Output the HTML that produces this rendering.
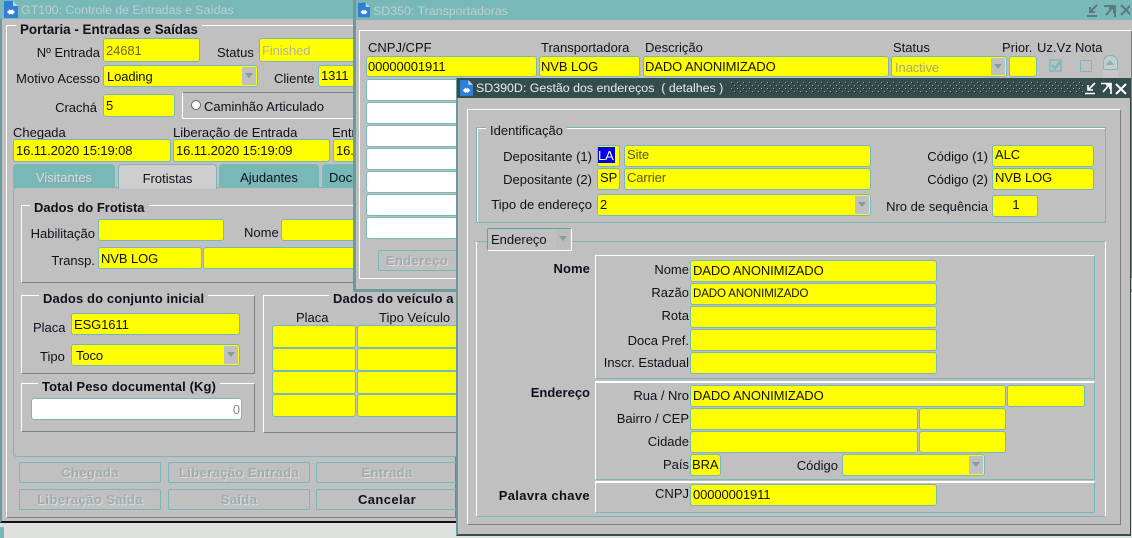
<!DOCTYPE html>
<html><head><meta charset="utf-8">
<style>
html,body{margin:0;padding:0;width:1132px;height:538px;overflow:hidden;background:#dfe1df}
*{box-sizing:border-box}
body{position:relative;font:13px/16px "Liberation Sans",Arial,sans-serif;color:#000}
div,span,svg{position:absolute}
.w{background:#c0c0c0}
.t{white-space:nowrap;line-height:16px;color:#10101c}
.b{font-weight:bold;letter-spacing:.12px}
.r{text-align:right}
.f{background:#ff0;border:1.5px solid #78b8b8;border-radius:3px;white-space:nowrap;overflow:hidden;padding-left:2px;color:#111;letter-spacing:-.1px}
.w3 .f{border-radius:2px;border:2px solid;border-color:#5f9f9f #fff #fff #5f9f9f;padding-left:1px}
.e{background:#fff}
.a{right:1px;top:1px;bottom:1px;width:14px;background:#c0c0c0}
.a:after{content:"";position:absolute;left:3px;top:6px;border:4.5px solid transparent;border-top:5px solid #889a9a;border-bottom:0}
.btn{border:1.5px solid #78b8b8;border-radius:2px;text-align:center;font-weight:bold;color:#a0aaaa;text-shadow:1px 1px 0 #dcdcdc;letter-spacing:.4px;line-height:19px}
.g{border:1px solid;border-color:#fff #808080 #808080 #fff}
.gt{border:1px solid #78b8b8;box-shadow:inset 1px 1px 0 #fff}
.lg{background:#c0c0c0;padding:0 4px;white-space:nowrap;color:#10101c;line-height:16px}
</style></head><body>

<!-- GT100 -->
<div style="left:0;top:527px;width:4px;height:11px;background:#78b8b8"></div>
<div class="w" style="left:0;top:0;width:460px;height:523px;border-left:2px solid #6d9a9a;border-bottom:2px solid #111"></div>
<div style="left:0;top:0;width:460px;height:19px;background:#78b8b8"></div>
<svg style="left:4px;top:1px" width="14" height="17" viewBox="0 0 14 17"><path d="M0 0H9L14 5V17H0Z" fill="#2f7fd6"/><path d="M9 0V5H14" fill="#bcd8f0"/><path d="M3 11L6 8V14ZM11 11L8 8V14Z" fill="#fff"/><path d="M6 9H8V13H6Z" fill="#fff"/></svg>
<div class="t" style="left:21px;top:2px;color:#bcd0d0;font-size:12.3px">GT100: Controle de Entradas e Saídas</div>
<div style="left:6px;top:25px;width:450px;height:493px;border:1px solid;border-color:#fff #808080 #808080 #fff"></div>
<div class="lg b" style="left:16px;top:22px;font-size:13.4px;letter-spacing:0">Portaria - Entradas e Saídas</div>

<div class="t r" style="right:1032px;top:45px">Nº Entrada</div>
<div class="f" style="left:103px;top:38px;width:97px;height:24px;line-height:24px;color:#6a6a20">24681</div>
<div class="t" style="left:217px;top:45px">Status</div>
<div class="f" style="left:259px;top:38px;width:110px;height:24px;line-height:24px;color:#b4b4a0">Finished</div>
<div class="t r" style="right:1032px;top:71px">Motivo Acesso</div>
<div class="f" style="left:103px;top:65px;width:155px;height:22px;line-height:22px;padding-left:3px">Loading<div class="a"></div></div>
<div class="t" style="left:274px;top:71px">Cliente</div>
<div class="f" style="left:318px;top:65px;width:50px;height:22px;line-height:19px">1311</div>
<div class="t r" style="right:1035px;top:100px">Crachá</div>
<div class="f" style="left:103px;top:94px;width:72px;height:23px;line-height:21px">5</div>
<div style="left:182px;top:92px;width:190px;height:27px;border-left:1px solid #fff;border-top:1px solid #808080;border-bottom:1px solid #fff"></div>
<div style="left:191px;top:100px;width:10px;height:10px;border-radius:50%;background:#fff;border:1px solid #666"></div>
<div class="t" style="left:204px;top:99px">Caminhão Articulado</div>

<div class="t" style="left:13px;top:125px">Chegada</div>
<div class="t" style="left:173px;top:125px">Liberação de Entrada</div>
<div class="t" style="left:332px;top:125px">Entrada</div>
<div class="f" style="left:13px;top:139px;width:158px;height:23px;line-height:21px">16.11.2020 15:19:08</div>
<div class="f" style="left:173px;top:139px;width:157px;height:23px;line-height:21px">16.11.2020 15:19:09</div>
<div class="f" style="left:333px;top:139px;width:60px;height:23px;line-height:21px">16.11.2020</div>

<div style="left:13px;top:164px;width:102px;height:24px;background:#78b8b8;border-radius:4px 4px 0 0;text-align:center;line-height:28px;color:#cfe0e0;text-shadow:1px 1px 0 #8fa0a0">Visitantes</div>
<div style="left:219px;top:164px;width:100px;height:24px;background:#78b8b8;border-radius:4px 4px 0 0;text-align:center;line-height:28px;color:#10101c">Ajudantes</div>
<div style="left:322px;top:164px;width:60px;height:24px;background:#78b8b8;border-radius:4px 4px 0 0;line-height:28px;padding-left:7px;color:#10101c">Documentos</div>
<div style="left:13px;top:187px;width:447px;height:270px;border:1.5px solid #78b8b8;border-radius:4px;background:#c0c0c0"></div>
<div style="left:118px;top:164px;width:99px;height:25px;background:#cecece;border:1px solid #78b8b8;border-bottom:0;border-radius:4px 4px 0 0;text-align:center;line-height:27px;color:#10101c">Frotistas</div>

<div class="g" style="left:21px;top:205px;width:430px;height:78px"></div>
<div class="lg b" style="left:30px;top:200px;letter-spacing:0">Dados do Frotista</div>
<div class="t r" style="right:1037px;top:226px">Habilitação</div>
<div class="f" style="left:98px;top:219px;width:126px;height:22px"></div>
<div class="t" style="left:244px;top:225px">Nome</div>
<div class="f" style="left:281px;top:219px;width:120px;height:22px"></div>
<div class="t r" style="right:1037px;top:253px">Transp.</div>
<div class="f" style="left:98px;top:247px;width:104px;height:22px;line-height:21px">NVB LOG</div>
<div class="f" style="left:203px;top:247px;width:200px;height:22px"></div>

<div class="g" style="left:21px;top:295px;width:234px;height:79px"></div>
<div class="lg b" style="left:39px;top:291px">Dados do conjunto inicial</div>
<div class="t" style="left:33px;top:320px">Placa</div>
<div class="f" style="left:71px;top:313px;width:169px;height:22px;line-height:21px">ESG1611</div>
<div class="t" style="left:40px;top:349px">Tipo</div>
<div class="f" style="left:71px;top:344px;width:169px;height:22px;line-height:22px;padding-left:4px">Toco<div class="a"></div></div>
<div class="g" style="left:21px;top:383px;width:234px;height:49px"></div>
<div class="lg b" style="left:38px;top:379px">Total Peso documental (Kg)</div>
<div class="f e" style="left:31px;top:398px;width:211px;height:22px;line-height:21px;text-align:right;padding-right:1px;color:#8a8a8a;background:#fff">0</div>

<div class="g" style="left:263px;top:295px;width:195px;height:138px"></div>
<div class="lg b" style="left:329px;top:291px">Dados do veículo a</div>
<div class="t" style="left:296px;top:310px">Placa</div>
<div class="t" style="left:379px;top:310px">Tipo Veículo</div>
<div class="f" style="left:272px;top:325px;width:84px;height:23px"></div><div class="f" style="left:357px;top:325px;width:110px;height:23px"></div>
<div class="f" style="left:272px;top:348px;width:84px;height:23px"></div><div class="f" style="left:357px;top:348px;width:110px;height:23px"></div>
<div class="f" style="left:272px;top:371px;width:84px;height:23px"></div><div class="f" style="left:357px;top:371px;width:110px;height:23px"></div>
<div class="f" style="left:272px;top:394px;width:84px;height:23px"></div><div class="f" style="left:357px;top:394px;width:110px;height:23px"></div>

<div class="btn" style="left:19px;top:462px;width:142px;height:21px">Chegada</div>
<div class="btn" style="left:168px;top:462px;width:142px;height:21px">Liberação Entrada</div>
<div class="btn" style="left:316px;top:462px;width:142px;height:21px">Entrada</div>
<div class="btn" style="left:19px;top:489px;width:142px;height:21px">Liberação Saída</div>
<div class="btn" style="left:168px;top:489px;width:142px;height:21px">Saída</div>
<div class="btn" style="left:316px;top:489px;width:142px;height:21px;color:#10101c;text-shadow:none">Cancelar</div>

<!-- SD350 -->
<div class="w" style="left:353px;top:0;width:779px;height:292px;border-left:3px solid #6d9a9a;border-bottom:3px solid #6d9a9a"></div>
<div style="left:356px;top:0;width:776px;height:20px;background:#78b8b8"></div>
<svg style="left:358px;top:2px" width="12" height="16" viewBox="0 0 14 17"><path d="M0 0H9L14 5V17H0Z" fill="#2f7fd6"/><path d="M9 0V5H14" fill="#bcd8f0"/><path d="M3 11L6 8V14ZM11 11L8 8V14Z" fill="#fff"/><path d="M6 9H8V13H6Z" fill="#fff"/></svg>
<div class="t" style="left:373px;top:3px;color:#bcd0d0;font-size:12.4px">SD350: Transportadoras</div>
<svg style="left:1086px;top:3px" width="44" height="14" viewBox="0 0 44 14" fill="none" stroke="#5a7c7c" stroke-width="2"><path d="M11 2L4 9M4 4V9H9M1 13H11"/><path d="M18 3H29V14M27 4L20 12M23 5H28V10"/><path d="M35 2L45 12M45 2L35 12" stroke-width="2.2"/></svg>
<div style="left:359px;top:30px;width:773px;height:249px;border:1px solid;border-color:#fff #808080 #fff #fff"></div>

<div class="t" style="left:368px;top:40px">CNPJ/CPF</div>
<div class="t" style="left:541px;top:40px">Transportadora</div>
<div class="t" style="left:645px;top:40px">Descrição</div>
<div class="t" style="left:893px;top:40px">Status</div>
<div class="t" style="left:1002px;top:40px">Prior.</div>
<div class="t" style="left:1037px;top:40px">Uz.Vz</div>
<div class="t" style="left:1075px;top:40px">Nota</div>
<div class="f" style="left:366px;top:56px;width:171px;height:21px;line-height:19px;padding-left:1px">00000001911</div>
<div class="f" style="left:539px;top:56px;width:101px;height:21px;line-height:19px;padding-left:1px">NVB LOG</div>
<div class="f" style="left:643px;top:56px;width:246px;height:21px;line-height:19px;padding-left:1px">DADO ANONIMIZADO</div>
<div class="f" style="left:891px;top:56px;width:116px;height:21px;line-height:21px;padding-left:3px;color:#a6a67a">Inactive<div class="a"></div></div>
<div class="f" style="left:1009px;top:56px;width:28px;height:21px"></div>
<svg style="left:1049px;top:59px" width="14" height="14" viewBox="0 0 14 14" fill="none"><rect x="1" y="1" width="11" height="11" stroke="#78b8b8" stroke-width="1.5"/><path d="M3 6L6 9L11 3" stroke="#78b8b8" stroke-width="2.4"/></svg>
<div style="left:1080px;top:60px;width:12px;height:12px;border:1.5px solid #78b8b8"></div>
<div style="left:1103px;top:55px;width:15px;height:15px;border:1px solid #78b8b8;border-radius:7px 7px 2px 2px;background:#c8cccc"></div>
<div style="left:1106px;top:60px;border:4.5px solid transparent;border-bottom:5px solid #78b8b8;border-top:0"></div>
<div style="left:1103px;top:70px;width:15px;height:10px;background:#c8c8c8"></div>
<div class="f e" style="left:366px;top:79px;width:171px;height:22px;background:#fff"></div>
<div class="f e" style="left:366px;top:102px;width:171px;height:22px;background:#fff"></div>
<div class="f e" style="left:366px;top:125px;width:171px;height:22px;background:#fff"></div>
<div class="f e" style="left:366px;top:148px;width:171px;height:22px;background:#fff"></div>
<div class="f e" style="left:366px;top:171px;width:171px;height:22px;background:#fff"></div>
<div class="f e" style="left:366px;top:194px;width:171px;height:22px;background:#fff"></div>
<div class="f e" style="left:366px;top:217px;width:171px;height:22px;background:#fff"></div>
<div class="btn" style="left:378px;top:250px;width:90px;height:21px;padding-right:12px">Endereço</div>

<!-- SD390D -->
<div class="w w3" style="left:456px;top:78px;width:675px;height:458px;border-left:2px solid #6d9a9a;border-bottom:2px solid #2f5050;border-right:1px solid #2f4444"></div>
<div style="left:457px;top:78px;width:674px;height:20px;background:#354c4c"></div>
<svg style="left:460px;top:80px" width="13" height="16" viewBox="0 0 14 17"><path d="M0 0H9L14 5V17H0Z" fill="#2f7fd6"/><path d="M9 0V5H14" fill="#bcd8f0"/><path d="M3 11L6 8V14ZM11 11L8 8V14Z" fill="#fff"/><path d="M6 9H8V13H6Z" fill="#fff"/></svg>
<div class="t" style="left:476px;top:80px;color:#e8f0f0;font-size:12.4px">SD390D: Gestão dos endereços &nbsp;( detalhes )</div>
<svg style="left:731px;top:82px" width="354" height="12"><defs><pattern id="d" width="6" height="6" patternUnits="userSpaceOnUse"><rect x="0" y="0" width="1" height="1" fill="#a0b0b0"/><rect x="3" y="3" width="1" height="1" fill="#a0b0b0"/><rect x="1" y="1" width="1" height="1" fill="#0f1f1f"/><rect x="4" y="4" width="1" height="1" fill="#0f1f1f"/></pattern></defs><rect width="354" height="12" fill="url(#d)"/></svg>
<svg style="left:1085px;top:81px" width="44" height="14" viewBox="0 0 44 14" fill="none" stroke="#fff" stroke-width="1.6"><path d="M10 2L3 9M3 4V9H8M0 12.5H10"/><path d="M16 2.5H26V13M25 3L18 11M21 4H25V8"/><path d="M31 3L41 13M41 3L31 13" stroke-width="2"/></svg>
<div style="left:467px;top:109px;width:654px;height:416px;border:1px solid;border-color:#fff #808080 #808080 #fff"></div>

<div class="gt" style="left:476px;top:127px;width:630px;height:96px"></div>
<div class="lg" style="left:486px;top:123px">Identificação</div>
<div class="t r" style="right:540px;top:149px">Depositante (1)</div>
<div class="f" style="left:597px;top:145px;width:23px;height:22px;padding:0 0 0 1px"><span style="left:0;top:1px;width:17px;height:16px;background:#0000e6;color:#fff;line-height:17px">LA</span></div>
<div class="f" style="left:624px;top:145px;width:247px;height:22px;line-height:18px;padding-left:2px;color:#58581c">Site</div>
<div class="t r" style="right:540px;top:172px">Depositante (2)</div>
<div class="f" style="left:597px;top:168px;width:23px;height:22px;line-height:18px">SP</div>
<div class="f" style="left:624px;top:168px;width:247px;height:22px;line-height:18px;padding-left:2px;color:#58581c">Carrier</div>
<div class="t r" style="right:540px;top:197px">Tipo de endereço</div>
<div class="f" style="left:597px;top:194px;width:274px;height:22px;line-height:20px;padding-left:2px">2<div class="a"></div></div>
<div class="t r" style="right:144px;top:149px">Código (1)</div>
<div class="f" style="left:992px;top:145px;width:102px;height:22px;line-height:18px">ALC</div>
<div class="t r" style="right:144px;top:172px">Código (2)</div>
<div class="f" style="left:992px;top:168px;width:102px;height:22px;line-height:18px">NVB LOG</div>
<div class="t r" style="right:144px;top:199px">Nro de sequência</div>
<div class="f" style="left:992px;top:195px;width:46px;height:22px;line-height:17px;text-align:center">1</div>

<div class="gt" style="left:476px;top:241px;width:630px;height:276px;border:1px solid #fff;box-shadow:none;border-top-color:#78b8b8;border-bottom-color:#78b8b8"></div>
<div style="left:487px;top:228px;width:85px;height:23px;background:#c0c0c0;border:1.5px solid;border-color:#5f9f9f #fff #fff #5f9f9f;border-radius:2px;line-height:21px;padding-left:3px;color:#10101c">Endereço<div class="a" style="background:#bcbcbc"></div></div>

<div style="left:595px;top:255px;width:500px;height:124px;border:1px solid;border-color:#fff #78b8b8 #78b8b8 #fff"></div>
<div style="left:595px;top:381px;width:500px;height:99px;border:1px solid;border-color:#fff #78b8b8 #78b8b8 #fff;border-top-width:2px"></div>
<div style="left:595px;top:481px;width:500px;height:32px;border:1px solid;border-color:#fff #78b8b8 #78b8b8 #fff;border-top-width:2px"></div>
<div class="t b r" style="right:542px;top:261px;letter-spacing:.1px">Nome</div>
<div class="t b r" style="right:542px;top:385px;letter-spacing:0">Endereço</div>
<div class="t b r" style="right:542px;top:488px;letter-spacing:.35px">Palavra chave</div>

<div class="t r" style="right:443px;top:262px">Nome</div>
<div class="f" style="left:690px;top:260px;width:247px;height:22px;line-height:20px">DADO ANONIMIZADO</div>
<div class="t r" style="right:443px;top:285px">Razão</div>
<div class="f" style="left:690px;top:283px;width:247px;height:22px;line-height:20px;font-size:11.5px">DADO ANONIMIZADO</div>
<div class="t r" style="right:443px;top:308px">Rota</div>
<div class="f" style="left:690px;top:306px;width:247px;height:22px"></div>
<div class="t r" style="right:443px;top:333px">Doca Pref.</div>
<div class="f" style="left:690px;top:329px;width:247px;height:22px"></div>
<div class="t r" style="right:443px;top:355px">Inscr. Estadual</div>
<div class="f" style="left:690px;top:352px;width:247px;height:22px"></div>

<div class="t r" style="right:443px;top:388px">Rua / Nro</div>
<div class="f" style="left:690px;top:385px;width:316px;height:22px;line-height:20px">DADO ANONIMIZADO</div>
<div class="f" style="left:1007px;top:385px;width:78px;height:22px"></div>
<div class="t r" style="right:443px;top:411px">Bairro / CEP</div>
<div class="f" style="left:690px;top:408px;width:228px;height:22px"></div>
<div class="f" style="left:919px;top:408px;width:87px;height:22px"></div>
<div class="t r" style="right:443px;top:434px">Cidade</div>
<div class="f" style="left:690px;top:431px;width:228px;height:22px"></div>
<div class="f" style="left:919px;top:431px;width:87px;height:22px"></div>
<div class="t r" style="right:443px;top:457px">País</div>
<div class="f" style="left:690px;top:454px;width:31px;height:22px;line-height:20px;padding-left:1px">BRA</div>
<div class="t r" style="right:294px;top:458px">Código</div>
<div class="f" style="left:842px;top:454px;width:143px;height:22px">
<div class="a"></div></div>
<div class="t r" style="right:443px;top:486px">CNPJ</div>
<div class="f" style="left:690px;top:484px;width:247px;height:22px;line-height:20px">00000001911</div>

</body></html>
